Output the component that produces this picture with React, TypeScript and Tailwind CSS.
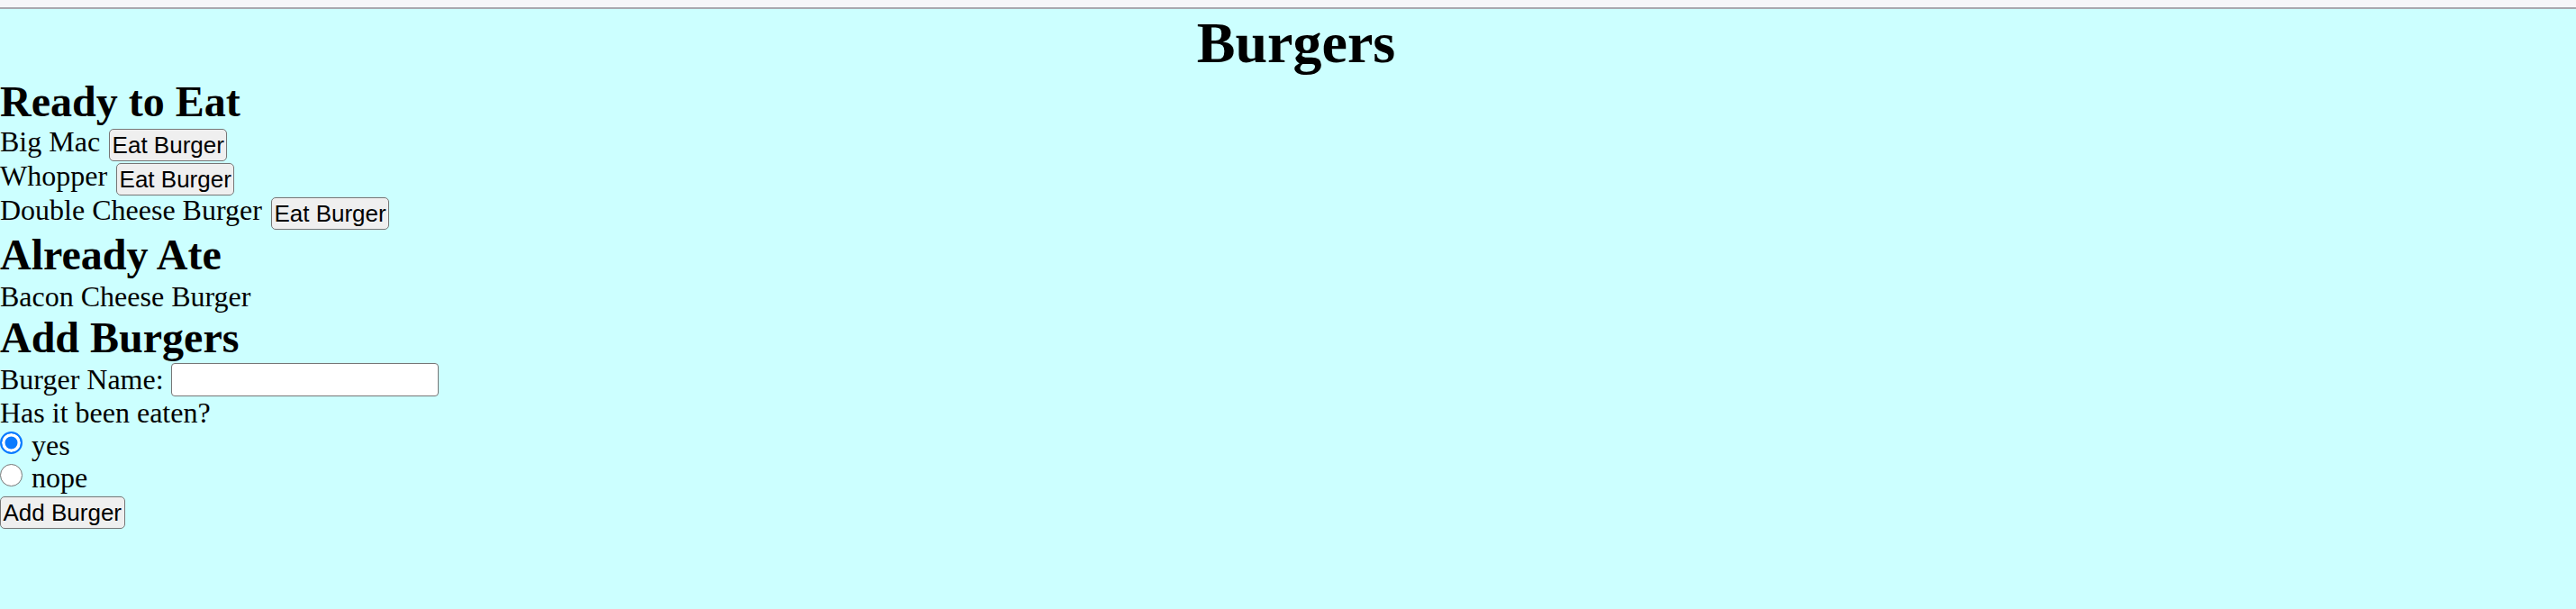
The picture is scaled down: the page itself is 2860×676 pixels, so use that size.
import React from "react";

const readyBurgers = ["Big Mac", "Whopper", "Double Cheese Burger"];
const eatenBurgers = ["Bacon Cheese Burger"];

const buttonClass =
    "h-[36px] px-[2.5px] border-[1.5px] border-[#767676] rounded-[5px] bg-[#efefef] text-[26px] leading-none text-black font-['Liberation_Sans',Arial,sans-serif]";

const radioClass =
    "appearance-none mt-[3px] w-[25px] h-[25px] rounded-full bg-white border-[1.5px] border-[#767676] checked:bg-[#0a7aff] checked:border-[2.5px] checked:border-[#0a7aff] checked:shadow-[inset_0_0_0_3.5px_#fff]";

const App = () => {
    return (
        <div className="h-[676px] flex flex-col font-['Liberation_Serif','Times_New_Roman',serif] text-black">
            {/* top strip */}
            <div className="h-[10px] bg-[#f6f6f9] border-b-2 border-[#a9a9b0]" />
            <div className="flex-1 bg-[#ccffff] text-[32px]">
                <h1 className="text-[64px] font-bold text-center pl-[18px] leading-[75px]">Burgers</h1>

                <h2 className="text-[48px] font-bold leading-[56px]">Ready to Eat</h2>
                {readyBurgers.map((name) => (
                    <div key={name} className="flex items-start h-[38px]">
                        <span className="leading-[32px] mr-[10px]">{name}</span>
                        <button className={buttonClass + " mt-[2px]"}>Eat Burger</button>
                    </div>
                ))}

                <h2 className="text-[48px] font-bold leading-[55px]">Already Ate</h2>
                {eatenBurgers.map((name) => (
                    <div key={name} className="leading-[38px]">
                        {name}
                    </div>
                ))}

                <h2 className="text-[48px] font-bold leading-[54px]">Add Burgers</h2>
                <form onSubmit={(e) => e.preventDefault()}>
                    <div className="flex items-start h-[38px]">
                        <label htmlFor="burger" className="leading-[38px] mr-[8px]">
                            Burger Name:
                        </label>
                        <input
                            id="burger"
                            type="text"
                            className="mt-[1px] w-[297px] h-[37px] bg-white border-[1.5px] border-[#767676] rounded-[4px] px-[3px] text-[26px] font-['Liberation_Sans',Arial,sans-serif] outline-none"
                        />
                    </div>
                    <div className="leading-[36px]">Has it been eaten?</div>
                    <label className="flex items-start h-[36px]">
                        <input type="radio" name="eaten" defaultChecked className={radioClass} />
                        <span className="leading-[36px] ml-[10px]">yes</span>
                    </label>
                    <label className="flex items-start h-[36px]">
                        <input type="radio" name="eaten" className={radioClass} />
                        <span className="leading-[36px] ml-[10px]">nope</span>
                    </label>
                    <div className="flex pt-[3px]">
                        <button type="submit" className={buttonClass}>Add Burger</button>
                    </div>
                </form>
            </div>
        </div>
    );
};

export default App;
